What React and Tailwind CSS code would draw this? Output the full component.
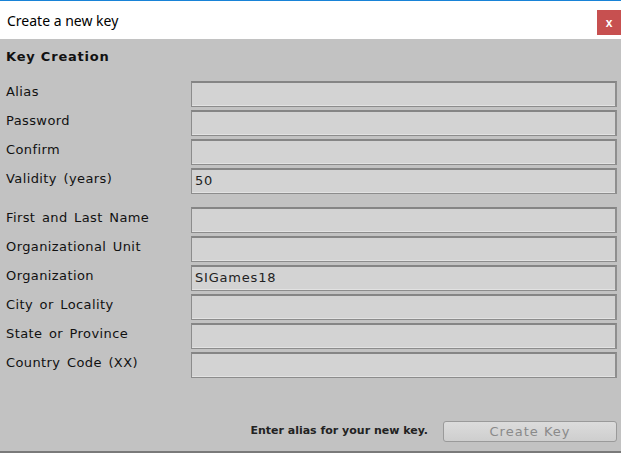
export default function App() {
  const group1 = [
    ["Alias", ""],
    ["Password", ""],
    ["Confirm", ""],
    ["Validity (years)", "50"],
  ];
  const group2 = [
    ["First and Last Name", ""],
    ["Organizational Unit", ""],
    ["Organization", "SIGames18"],
    ["City or Locality", ""],
    ["State or Province", ""],
    ["Country Code (XX)", ""],
  ];
  const Row = ({ label, value }) => (
    <div className="flex items-center h-[26px]">
      <div className="w-[185px] shrink-0 text-[13px] text-[#111] tracking-[0.4px] [word-spacing:2px] pb-[4px] whitespace-nowrap">{label}</div>
      <div className="w-[426px] shrink-0 h-[26px] bg-[#d3d3d3] border border-[#8c8c8c] border-t-2 border-t-[#858585] border-r-2 border-r-[#8e8e8e] shadow-[inset_0_-1px_0_#e2e2e2] flex items-center px-[3px] text-[13px] text-[#222] tracking-[0.8px] pb-[2px]">
        {value}
      </div>
    </div>
  );
  return (
    <div className="w-[621px] h-[453px] flex flex-col overflow-hidden" style={{ fontFamily: '"DejaVu Sans", sans-serif' }}>
      <div className="h-px bg-[#1883d7]" />
      <div className="h-[38px] bg-white flex justify-between">
        <div className="pl-[7px] pt-[9px] text-[14px] text-black" style={{ fontFamily: '"Noto Sans", "Liberation Sans", sans-serif' }}>Create a new key</div>
        <div className="mt-[9px] w-[24px] h-[25px] bg-[#c75050] flex items-center justify-center text-white text-[12px] font-bold leading-none" style={{ fontFamily: '"Liberation Sans", sans-serif' }}>x</div>
      </div>
      <div className="flex-1 bg-[#c2c2c2] flex flex-col pl-[6px] pr-[4px] pb-[9px] border-b-2 border-b-[#7a7a7a]">
        <div className="h-[42px] pt-[8px] text-[13px] font-bold text-[#111] tracking-[0.8px]">Key Creation</div>
        <div className="flex flex-col gap-[3px]">
          {group1.map(([l, v]) => <Row key={l} label={l} value={v} />)}
        </div>
        <div className="h-[13px]" />
        <div className="flex flex-col gap-[3px]">
          {group2.map(([l, v]) => <Row key={l} label={l} value={v} />)}
        </div>
        <div className="mt-auto flex items-center justify-end gap-[15px]">
          <div className="text-[11px] font-bold text-[#222] tracking-normal">Enter alias for your new key.</div>
          <div className="w-[174px] h-[21px] rounded-[3px] border border-[#9a9a9a] bg-gradient-to-b from-[#dcdcdc] to-[#cecece] flex items-center justify-center text-[13px] text-[#8a8a8a] tracking-[1px]">Create Key</div>
        </div>
      </div>
    </div>
  );
}
